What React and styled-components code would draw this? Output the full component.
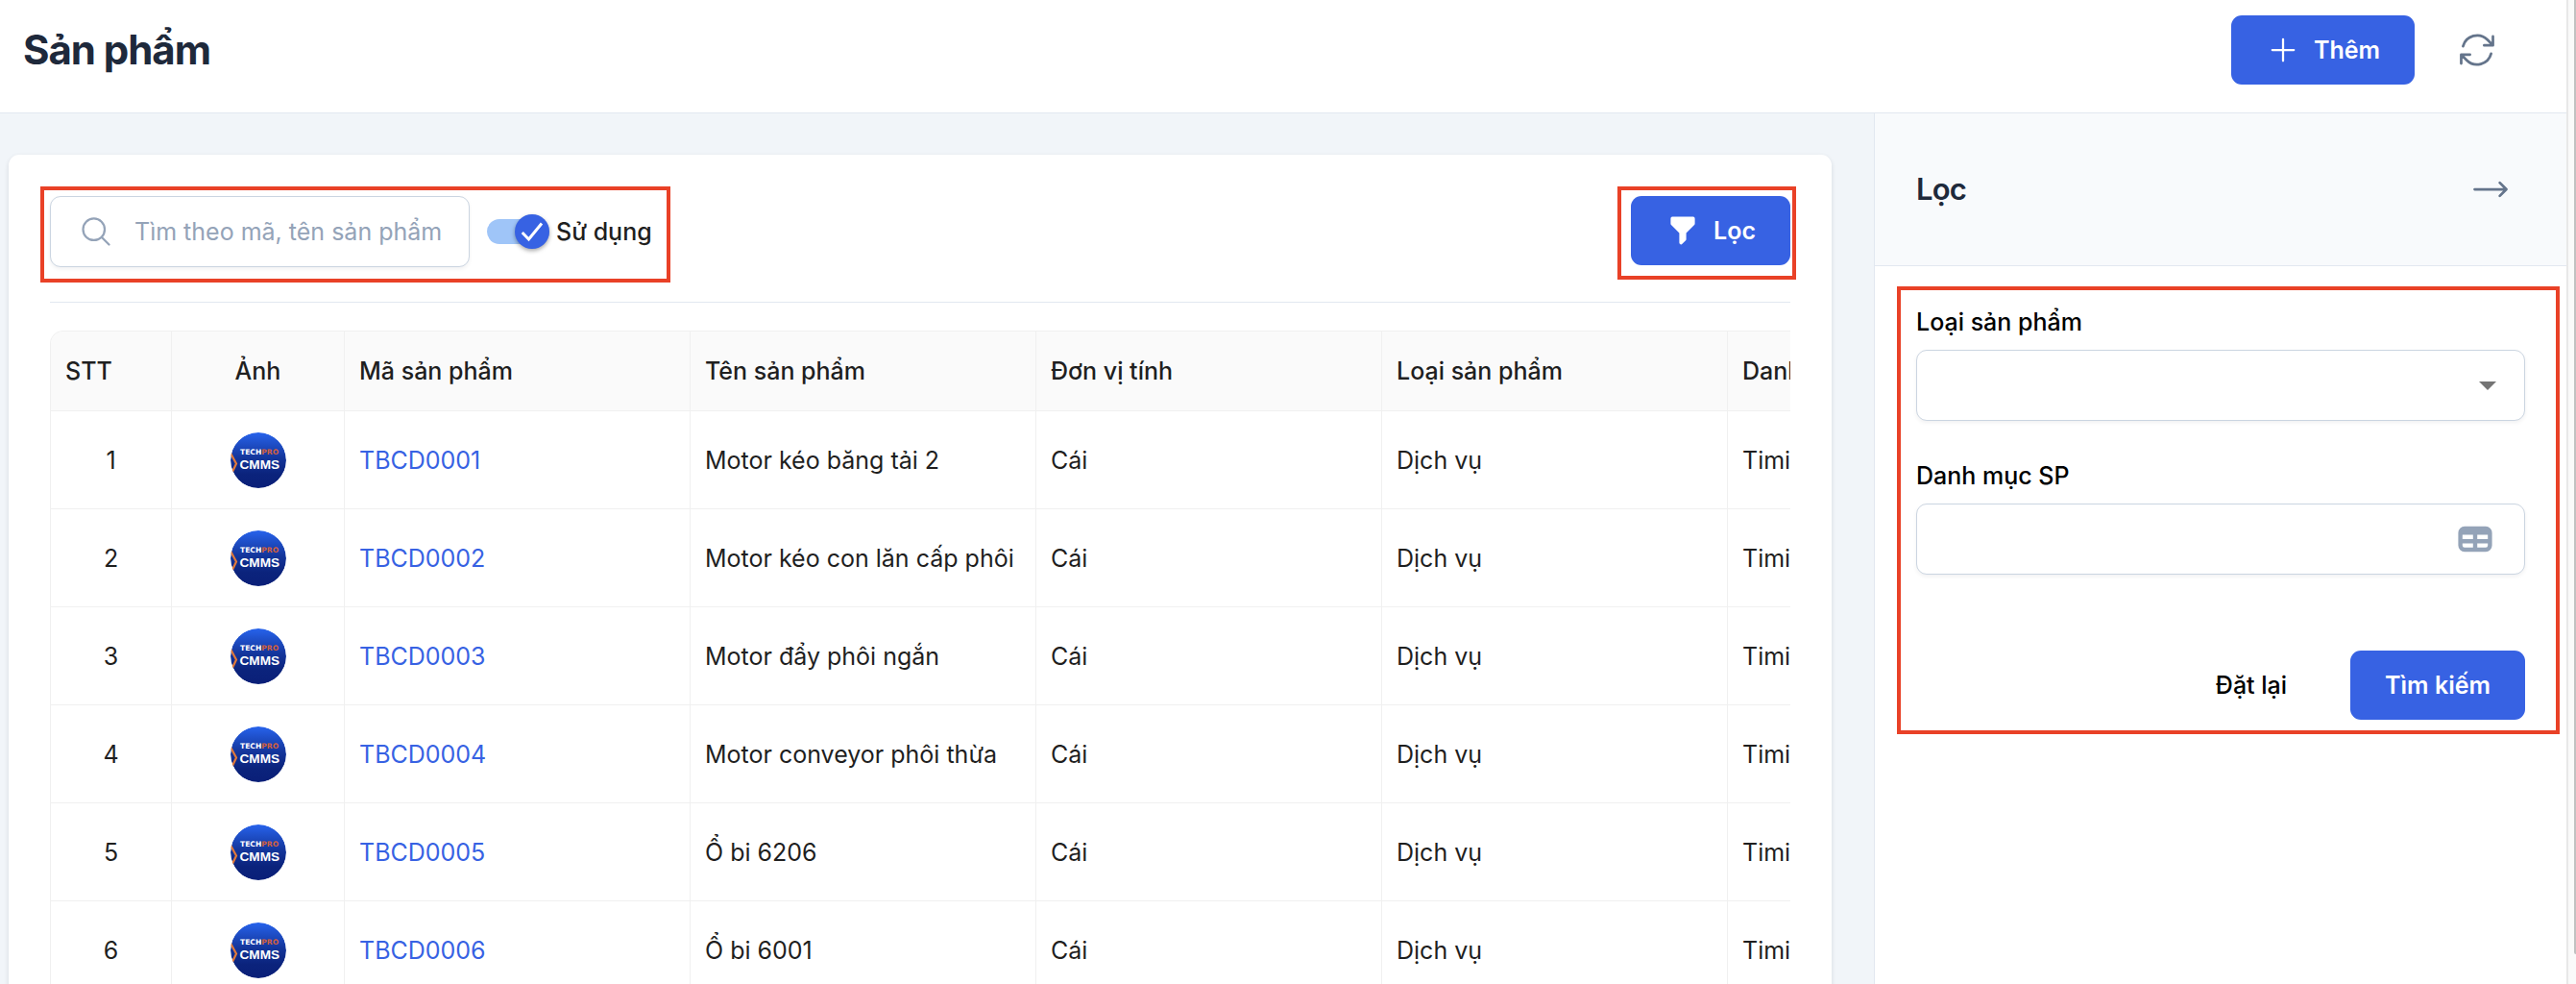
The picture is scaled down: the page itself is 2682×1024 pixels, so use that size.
import React, { useState } from "react";
import styled, { createGlobalStyle } from "styled-components";
import {
  HiOutlineArrowPath,
  HiOutlineArrowLongRight,
  HiOutlinePlus,
  HiOutlineMagnifyingGlass,
} from "react-icons/hi2";
import { HiFilter, HiTable } from "react-icons/hi";

const GlobalStyle = createGlobalStyle`
  *, *::before, *::after { box-sizing: border-box; }
  body {
    margin: 0;
    overflow: hidden;
    background: #ffffff;
    color: #1f1f1f;
    font-family: Inter, "Noto Sans", sans-serif;
    font-size: 25px;
    line-height: 36px;
  }
  button, input, select { font: inherit; }
`;

const Shell = styled.div`
  display: flex;
  height: 100vh;
`;

const Page = styled.div`
  flex: 1;
  min-width: 0;
  display: flex;
  flex-direction: column;
`;

const ScrollGutter = styled.div`
  flex: none;
  width: 10px;
  padding-left: 6px;
  border-left: 2px solid #e8e8e8;
  background: #fafafa;
`;

const ScrollThumb = styled.div`
  height: 97%;
  border-bottom-left-radius: 8px;
  background: #c1c1c1;
`;

const Header = styled.header`
  flex: none;
  display: flex;
  align-items: center;
  justify-content: space-between;
  padding: 16px 71px 29px 24px;
  border-bottom: 1px solid #e2e8f0;
`;

const Title = styled.h1`
  margin: 0;
  color: #1e293b;
  font-size: 42px;
  line-height: 56px;
  font-weight: 700;
  letter-spacing: -0.025em;
`;

const HeaderActions = styled.div`
  display: flex;
  align-items: center;
  gap: 43px;
`;

const Button = styled.button`
  display: inline-flex;
  align-items: center;
  gap: 14px;
  height: 72px;
  padding: 0 36px;
  border: 0;
  border-radius: 11px;
  background: ${(p) => (p.$ghost ? "transparent" : "#3762e3")};
  color: ${(p) => (p.$ghost ? "#000000" : "#ffffff")};
  font-weight: ${(p) => (p.$ghost ? 500 : 600)};
  white-space: nowrap;
  cursor: pointer;
`;

const IconButton = styled.button`
  display: inline-flex;
  padding: 0;
  border: 0;
  background: transparent;
  color: #64748b;
  cursor: pointer;
`;

const Body = styled.div`
  flex: 1;
  min-height: 0;
  display: flex;
`;

const Main = styled.main`
  flex: 1;
  min-width: 0;
  overflow: hidden;
  padding: 43px 44px 43px 9px;
  background: #f1f5f9;
`;

const Card = styled.section`
  padding: 43px;
  border-radius: 11px;
  background: #ffffff;
  box-shadow: 0 2px 5px rgba(15, 23, 42, 0.12);
`;

const Toolbar = styled.div`
  display: flex;
  align-items: flex-start;
  justify-content: space-between;
  padding-bottom: 36px;
  margin-bottom: 29px;
  border-bottom: 1px solid #e2e8f0;
`;

const Highlight = styled.div`
  position: relative;
  display: flex;
  flex-direction: ${(p) => (p.$column ? "column" : "row")};
  align-items: ${(p) => (p.$column ? "stretch" : "center")};
  gap: ${(p) => p.$gap || 0}px;

  &::after {
    content: "";
    position: absolute;
    inset: ${(p) => p.$outset};
    border: 4px solid #e94127;
    pointer-events: none;
  }
`;

const SearchBox = styled.label`
  display: flex;
  align-items: center;
  gap: 22px;
  width: 437px;
  height: 74px;
  padding: 0 29px;
  border: 1px solid #cbd5e1;
  border-radius: 11px;
  background: #ffffff;
  color: #94a3b8;
  box-shadow: 0 2px 4px rgba(15, 23, 42, 0.06);
`;

const SearchInput = styled.input`
  flex: 1;
  min-width: 0;
  padding: 0;
  border: 0;
  outline: 0;
  background: transparent;
  color: #1f1f1f;
  &::placeholder { color: #94a3b8; opacity: 1; }
`;

const SwitchLabel = styled.label`
  display: flex;
  align-items: center;
  gap: 7px;
  color: #1f1f1f;
  font-weight: 500;
  cursor: pointer;
`;

const SwitchTrack = styled.span`
  position: relative;
  width: 65px;
  height: 26px;
  border-radius: 13px;
  background: ${(p) => (p.$on ? "#9fc5f8" : "#cbd5e1")};
`;

const SwitchInput = styled.input`
  position: absolute;
  inset: 0;
  margin: 0;
  width: 100%;
  height: 100%;
  opacity: 0;
  cursor: pointer;
`;

const SwitchThumb = styled.span`
  position: absolute;
  top: -5px;
  ${(p) => (p.$on ? "right: 0;" : "left: 0;")}
  display: flex;
  align-items: center;
  justify-content: center;
  width: 36px;
  height: 36px;
  border-radius: 50%;
  background: #3762e3;
  box-shadow: 0 2px 4px rgba(0, 0, 0, 0.35);
  pointer-events: none;
`;

const TableScroller = styled.div`
  overflow: hidden;
  border-top: 1px solid #f0f0f0;
  border-left: 1px solid #f0f0f0;
  border-top-left-radius: 14px;
`;

const Table = styled.table`
  table-layout: fixed;
  width: 2106px;
  border-collapse: separate;
  border-spacing: 0;
`;

const Col = styled.col`
  width: ${(p) => p.$width}px;
`;

const HeadCell = styled.th`
  height: 83px;
  padding: 0 15px;
  border-right: 1px solid #f0f0f0;
  border-bottom: 1px solid #f0f0f0;
  background: #fafafa;
  font-weight: 500;
  text-align: ${(p) => (p.$center ? "center" : "left")};
  white-space: nowrap;
`;

const Cell = styled.td`
  height: 102px;
  padding: 0 15px;
  border-right: 1px solid #f0f0f0;
  border-bottom: 1px solid #f0f0f0;
  text-align: ${(p) => (p.$center ? "center" : "left")};
  white-space: nowrap;
`;

const CodeLink = styled.a`
  color: #3762e3;
  text-decoration: none;
`;

const Logo = styled.svg`
  display: block;
  margin: 0 auto;
  border-radius: 50%;
`;

const Panel = styled.aside`
  flex: none;
  width: 721px;
  border-left: 1px solid #e2e8f0;
  background: #ffffff;
`;

const PanelHeader = styled.div`
  display: flex;
  align-items: center;
  justify-content: space-between;
  height: 159px;
  padding: 0 57px 0 43px;
  border-bottom: 1px solid #e2e8f0;
  background: #f8fafc;
`;

const PanelTitle = styled.h2`
  margin: 0;
  color: #1e293b;
  font-size: 31px;
  line-height: 44px;
  font-weight: 600;
  letter-spacing: -0.025em;
`;

const Form = styled.form`
  padding: 40px 43px;
`;

const Field = styled.div`
  display: flex;
  flex-direction: column;
  gap: 11px;
`;

const FieldLabel = styled.label`
  color: #000000;
  font-weight: 500;
`;

const ControlBox = styled.div`
  display: flex;
  align-items: center;
  height: 74px;
  padding-right: 29px;
  border: 1px solid #cbd5e1;
  border-radius: 11px;
  background: #ffffff;
  color: ${(p) => p.$iconColor};
  box-shadow: 0 2px 4px rgba(15, 23, 42, 0.06);
`;

const Select = styled.select`
  appearance: none;
  flex: 1;
  min-width: 0;
  height: 72px;
  padding: 0 29px;
  border: 0;
  outline: 0;
  background: transparent;
`;

const TextInput = styled.input`
  flex: 1;
  min-width: 0;
  height: 72px;
  padding: 0 29px;
  border: 0;
  outline: 0;
  background: transparent;
`;

const FormActions = styled.div`
  display: flex;
  justify-content: flex-end;
  gap: 30px;
  padding-top: 40px;
`;

function ProductLogo({ id }) {
  return (
    <Logo width="58" height="58" viewBox="0 0 58 58" role="img" aria-label="Techpro CMMS">
      <defs>
        <linearGradient id={id} x1="0" y1="0" x2="0" y2="1">
          <stop offset="0" stopColor="#2763ec" />
          <stop offset="0.45" stopColor="#14369c" />
          <stop offset="0.75" stopColor="#0b237c" />
          <stop offset="1" stopColor="#0a1f78" />
        </linearGradient>
      </defs>
      <circle cx="29" cy="29" r="29" fill={`url(#${id})`} />
      <path d="M0 21.5 6 32.5 2 41" fill="none" stroke="#e0793a" strokeWidth="2.2" />
      <text x="10" y="23" fontFamily="DejaVu Sans, sans-serif" fontWeight="700" fontSize="7.6" fill="#fff">
        TECH<tspan fill="#d4603a">PRO</tspan>
      </text>
      <text x="9.5" y="37.5" fontFamily="Liberation Sans, sans-serif" fontWeight="700" fontSize="13.6" fill="#fff">
        CMMS
      </text>
    </Logo>
  );
}

const COLUMNS = [
  { title: "STT", width: 126 },
  { title: "Ảnh", width: 180, center: true },
  { title: "Mã sản phẩm", width: 360 },
  { title: "Tên sản phẩm", width: 360 },
  { title: "Đơn vị tính", width: 360 },
  { title: "Loại sản phẩm", width: 360 },
  { title: "Danh mục", width: 360 },
];

const PRODUCTS = [
  { code: "TBCD0001", name: "Motor kéo băng tải 2" },
  { code: "TBCD0002", name: "Motor kéo con lăn cấp phôi" },
  { code: "TBCD0003", name: "Motor đẩy phôi ngắn" },
  { code: "TBCD0004", name: "Motor conveyor phôi thừa" },
  { code: "TBCD0005", name: "Ổ bi 6206" },
  { code: "TBCD0006", name: "Ổ bi 6001" },
];

export default function App() {
  const [inUse, setInUse] = useState(true);

  return (
    <>
      <GlobalStyle />
      <Shell>
        <Page>
          <Header>
            <Title>Sản phẩm</Title>
            <HeaderActions>
              <Button type="button">
                <HiOutlinePlus size={36} />
                Thêm
              </Button>
              <IconButton type="button" aria-label="Tải lại">
                <HiOutlineArrowPath size={44} />
              </IconButton>
            </HeaderActions>
          </Header>
          <Body>
            <Main>
              <Card>
                <Toolbar>
                  <Highlight $gap={18} $outset="-10px -19px -16px -10px">
                    <SearchBox>
                      <HiOutlineMagnifyingGlass size={36} />
                      <SearchInput
                        type="text"
                        aria-label="Tìm kiếm sản phẩm"
                        placeholder="Tìm theo mã, tên sản phẩm"
                      />
                    </SearchBox>
                    <SwitchLabel>
                      <SwitchTrack $on={inUse}>
                        <SwitchInput
                          type="checkbox"
                          checked={inUse}
                          onChange={(e) => setInUse(e.target.checked)}
                        />
                        <SwitchThumb $on={inUse}>
                          {inUse && (
                            <svg width="30" height="30" viewBox="0 0 24 24" fill="none" stroke="#fff" strokeWidth="2.4">
                              <path d="m3.8 12.8 5.4 5.6L20 5.2" />
                            </svg>
                          )}
                        </SwitchThumb>
                      </SwitchTrack>
                      Sử dụng
                    </SwitchLabel>
                  </Highlight>
                  <Highlight $outset="-10px -6px -15px -14px">
                    <Button type="button">
                      <HiFilter size={36} />
                      Lọc
                    </Button>
                  </Highlight>
                </Toolbar>
                <TableScroller>
                  <Table>
                    <colgroup>
                      {COLUMNS.map((c) => (
                        <Col key={c.title} $width={c.width} />
                      ))}
                    </colgroup>
                    <thead>
                      <tr>
                        {COLUMNS.map((c) => (
                          <HeadCell key={c.title} $center={c.center}>
                            {c.title}
                          </HeadCell>
                        ))}
                      </tr>
                    </thead>
                    <tbody>
                      {PRODUCTS.map((p, i) => (
                        <tr key={p.code}>
                          <Cell $center>{i + 1}</Cell>
                          <Cell $center>
                            <ProductLogo id={`logo-${p.code}`} />
                          </Cell>
                          <Cell>
                            <CodeLink href="#">{p.code}</CodeLink>
                          </Cell>
                          <Cell>{p.name}</Cell>
                          <Cell>Cái</Cell>
                          <Cell>Dịch vụ</Cell>
                          <Cell>Timi</Cell>
                        </tr>
                      ))}
                    </tbody>
                  </Table>
                </TableScroller>
              </Card>
            </Main>
            <Panel>
              <PanelHeader>
                <PanelTitle>Lọc</PanelTitle>
                <IconButton type="button" aria-label="Đóng bộ lọc">
                  <HiOutlineArrowLongRight size={44} />
                </IconButton>
              </PanelHeader>
              <Form onSubmit={(e) => e.preventDefault()}>
                <Highlight $column $gap={39} $outset="-19px -36px -15px -20px">
                  <Field>
                    <FieldLabel htmlFor="type">Loại sản phẩm</FieldLabel>
                    <ControlBox $iconColor="#757575">
                      <Select id="type" defaultValue="">
                        <option value="" />
                      </Select>
                      <svg width="18" height="9" viewBox="0 0 18 9">
                        <path d="M0 0h18L9 9z" fill="currentColor" />
                      </svg>
                    </ControlBox>
                  </Field>
                  <Field>
                    <FieldLabel htmlFor="category">Danh mục SP</FieldLabel>
                    <ControlBox $iconColor="#94a3b8">
                      <TextInput id="category" type="text" />
                      <HiTable size={44} />
                    </ControlBox>
                  </Field>
                  <FormActions>
                    <Button type="reset" $ghost>
                      Đặt lại
                    </Button>
                    <Button type="submit">Tìm kiếm</Button>
                  </FormActions>
                </Highlight>
              </Form>
            </Panel>
          </Body>
        </Page>
        <ScrollGutter>
          <ScrollThumb />
        </ScrollGutter>
      </Shell>
    </>
  );
}
